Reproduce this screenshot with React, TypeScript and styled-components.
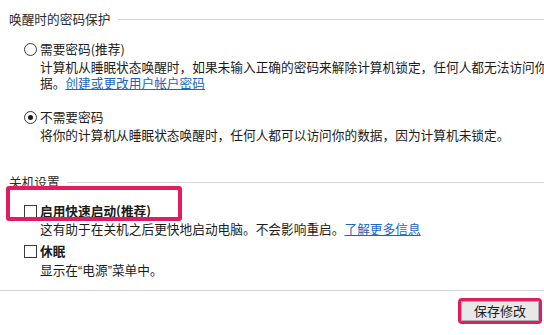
import styled, { createGlobalStyle } from "styled-components";

const GlobalStyle = createGlobalStyle`
  html, body {
    margin: 0;
    padding: 0;
    background: #ffffff;
    overflow: hidden;
  }
  body {
    font-family: "Noto Sans CJK SC", "Noto Sans", sans-serif;
    font-size: 12.7px;
    color: #1b1b1b;
  }
`;

const accent = "#e31c5f";

const Page = styled.div`
  width: 544px;
  height: 335px;
  box-sizing: border-box;
  padding-top: 10px;
  overflow: hidden;
  white-space: nowrap;
`;

const SectionHeader = styled.div<{ $gap?: number }>`
  display: flex;
  align-items: center;
  gap: 7px;
  padding-left: 9px;
  height: 18px;
  line-height: 18px;
  margin-top: ${(p) => p.$gap ?? 0}px;
  color: #2b2b2b;

  &::after {
    content: "";
    flex: 1;
    height: 1px;
    background: #d6d6d6;
  }
`;

const Options = styled.div`
  padding-left: 24px;
`;

const OptionRow = styled.div<{ $gap?: number }>`
  position: relative;
  display: flex;
  align-items: center;
  gap: 3px;
  height: 18px;
  line-height: 18px;
  margin-top: ${(p) => p.$gap ?? 0}px;
`;

const Radio = styled.span<{ $checked?: boolean }>`
  position: relative;
  width: 13px;
  height: 13px;
  box-sizing: border-box;
  border: 1px solid #3a3a3a;
  border-radius: 50%;
  background: #fff;

  &::after {
    content: "";
    display: ${(p) => (p.$checked ? "block" : "none")};
    position: absolute;
    left: 3px;
    top: 3px;
    width: 5px;
    height: 5px;
    border-radius: 50%;
    background: #1b1b1b;
  }
`;

const Checkbox = styled.span`
  width: 13px;
  height: 13px;
  box-sizing: border-box;
  border: 1px solid #3a3a3a;
  background: #fff;
`;

const Label = styled.span<{ $bold?: boolean }>`
  font-weight: ${(p) => (p.$bold ? 700 : 400)};
`;

const Description = styled.div<{ $gap?: number }>`
  padding-left: 16px;
  line-height: 16px;
  margin-top: ${(p) => p.$gap ?? 1}px;
`;

// quotes are narrow (proportional) in the original UI font
const Quote = styled.span`
  font-family: "Liberation Sans", sans-serif;
`;

const Link = styled.a`
  color: #1a66c2;
  text-decoration: underline;
  cursor: pointer;
`;

const Highlight = styled.div`
  position: absolute;
  left: -18px;
  top: -16px;
  width: 176px;
  height: 35px;
  box-sizing: border-box;
  border: 4px solid ${accent};
  border-radius: 3px;
  pointer-events: none;
`;

const Footer = styled.div`
  margin-top: 11px;
  border-top: 1px solid #d6d6d6;
  display: flex;
  justify-content: flex-end;
  padding: 10px 5px 0 0;
`;

const SaveButton = styled.button`
  width: 78px;
  height: 20px;
  padding: 0;
  box-sizing: border-box;
  border: 1px solid #adadad;
  background: #e8e8e8;
  color: #1b1b1b;
  font: inherit;
  font-size: 13px;
  line-height: 18px;
  outline: 3px solid ${accent};
  outline-offset: 0;
  border-radius: 1px;
`;

export default function App() {
  return (
    <>
      <GlobalStyle />
      <Page>
        <SectionHeader>唤醒时的密码保护</SectionHeader>
        <Options>
          <OptionRow $gap={12}>
            <Radio />
            <Label>需要密码(推荐)</Label>
          </OptionRow>
          <Description>
            计算机从睡眠状态唤醒时，如果未输入正确的密码来解除计算机锁定，任何人都无法访问你的数
            <br />
            据。<Link>创建或更改用户帐户密码</Link>
          </Description>
          <OptionRow $gap={17}>
            <Radio $checked />
            <Label>不需要密码</Label>
          </OptionRow>
          <Description>
            将你的计算机从睡眠状态唤醒时，任何人都可以访问你的数据，因为计算机未锁定。
          </Description>
        </Options>

        <SectionHeader $gap={30}>关机设置</SectionHeader>
        <Options>
          <OptionRow $gap={11}>
            <Highlight />
            <Checkbox />
            <Label $bold>启用快速启动(推荐)</Label>
          </OptionRow>
          <Description>
            这有助于在关机之后更快地启动电脑。不会影响重启。<Link>了解更多信息</Link>
          </Description>
          <OptionRow $gap={5}>
            <Checkbox />
            <Label $bold>休眠</Label>
          </OptionRow>
          <Description $gap={2}>
            显示在<Quote>“</Quote>电源<Quote>”</Quote>菜单中。
          </Description>
        </Options>

        <Footer>
          <SaveButton>保存修改</SaveButton>
        </Footer>
      </Page>
    </>
  );
}
